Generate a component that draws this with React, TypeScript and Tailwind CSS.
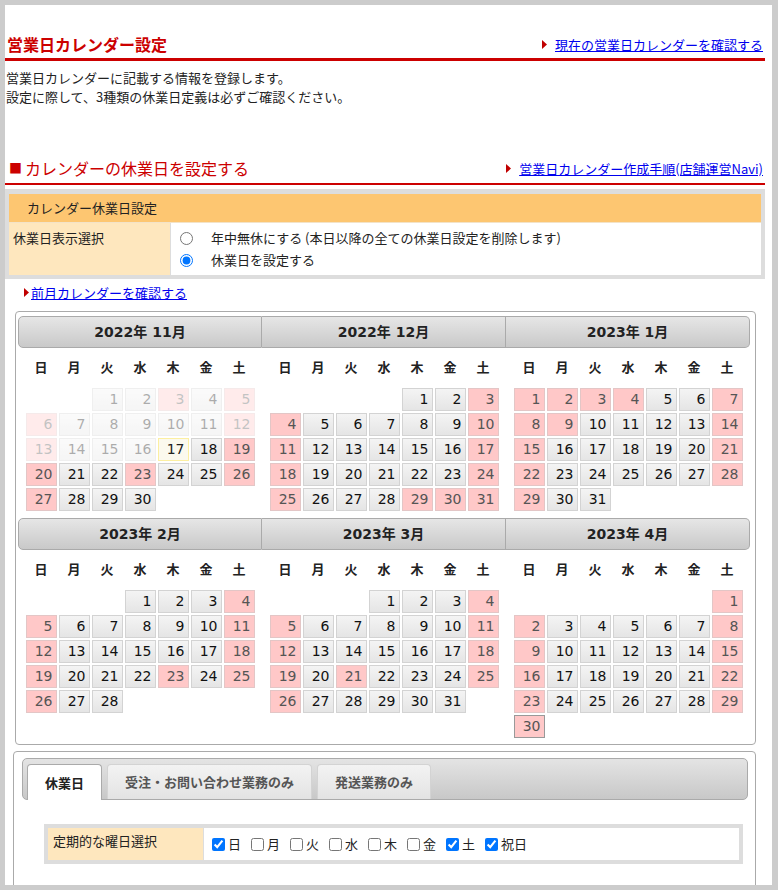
type Month = {
  title: string
  start: number
  days: number
  off: number[]
  past?: number
  today?: number
  focus?: number
}

const ROWS: Month[][] = [
  [
    { title: '2022年 11月', start: 2, days: 30, off: [3, 5, 6, 12, 13, 19, 20, 23, 26, 27], past: 16, today: 17 },
    { title: '2022年 12月', start: 4, days: 31, off: [3, 4, 10, 11, 17, 18, 24, 25, 29, 30, 31] },
    { title: '2023年 1月', start: 0, days: 31, off: [1, 2, 3, 4, 7, 8, 9, 14, 15, 21, 22, 28, 29] },
  ],
  [
    { title: '2023年 2月', start: 3, days: 28, off: [4, 5, 11, 12, 18, 19, 23, 25, 26] },
    { title: '2023年 3月', start: 3, days: 31, off: [4, 5, 11, 12, 18, 19, 21, 25, 26] },
    { title: '2023年 4月', start: 6, days: 30, off: [1, 2, 8, 9, 15, 16, 22, 23, 29, 30], focus: 30 },
  ],
]

const WEEK = ['日', '月', '火', '水', '木', '金', '土']
const CHECKS: [string, boolean][] = [
  ['日', true],
  ['月', false],
  ['火', false],
  ['水', false],
  ['木', false],
  ['金', false],
  ['土', true],
  ['祝日', true],
]

function Marker() {
  return (
    <svg width="5" height="9" viewBox="0 0 5 9" className="shrink-0">
      <path d="M0 0 L5 4.5 L0 9 Z" fill="#c00000" />
    </svg>
  )
}

function DayCell({ day, month }: { day: number; month: Month }) {
  const past = month.past !== undefined && day <= month.past
  const isToday = month.today === day
  const off = month.off.includes(day)
  let tone = 'border-[#d3d3d3] bg-linear-to-b from-[#f4f4f4] to-[#e5e5e5] text-[#111]'
  if (isToday) tone = 'border-[#fcefa1] bg-[#fbf9ee] text-[#222]'
  else if (off) tone = 'border-[#e3c6c6] bg-[#ffc8c8] text-[#555]'
  if (month.focus === day) tone = 'border-[#999] bg-[#ffc8c8] text-[#555]'
  return (
    <div
      className={`h-[23px] border pr-[3px] text-right text-[14px] leading-[21px] ${tone} ${past ? 'opacity-35' : ''}`}
    >
      {day}
    </div>
  )
}

function MonthBlock({ month, pos }: { month: Month; pos: number }) {
  const shape =
    pos === 0 ? 'rounded-l-[5px] border' : pos === 2 ? 'rounded-r-[5px] border border-l-0' : 'border border-l-0'
  const blanks = Array.from({ length: month.start })
  const days = Array.from({ length: month.days }, (_, i) => i + 1)
  return (
    <div className="flex flex-col">
      <div
        className={`flex h-[32px] items-center justify-center border-[#aaa] bg-linear-to-b from-[#e6e6e6] to-[#c9c9c9] text-[14px] font-bold text-[#222] ${shape}`}
      >
        {month.title}
      </div>
      <div className="mx-auto grid h-[40px] grid-cols-[repeat(7,31px)] items-center gap-x-[2px] text-center text-[13px] font-bold text-[#222]">
        {WEEK.map((w) => (
          <span key={w}>{w}</span>
        ))}
      </div>
      <div className="mx-auto grid grid-cols-[repeat(7,31px)] gap-[2px] font-['DejaVu_Sans',sans-serif]">
        {blanks.map((_, i) => (
          <div key={`b${i}`} />
        ))}
        {days.map((d) => (
          <DayCell key={d} day={d} month={month} />
        ))}
      </div>
    </div>
  )
}

export default function App() {
  return (
    <div className="h-[890px] w-[778px] bg-[#cccccc] pt-[5px] pl-[5px]">
      <div className="h-[880px] w-[767px] overflow-hidden bg-white font-['DejaVu_Sans','Noto_Sans_CJK_JP',sans-serif] text-[13px] text-[#222]">
        {/* page title */}
        <div className="mr-[7px] flex items-end justify-between border-b-[3px] border-[#cc0000] pt-[29px] pr-[2px] pb-[4px] pl-[2px]">
          <h1 className="font-['Noto_Sans_CJK_JP',sans-serif] text-[16px] leading-[20px] font-bold text-[#cc0000]">
            営業日カレンダー設定
          </h1>
          <a className="flex items-center gap-[8px] font-['Noto_Sans_CJK_JP',sans-serif] leading-[19px] text-[#0000ee] underline">
            <Marker />
            現在の営業日カレンダーを確認する
          </a>
        </div>

        <div className="mt-[7px] pl-[1px] font-['Noto_Sans_CJK_JP',sans-serif] leading-[19px]">
          <p>営業日カレンダーに記載する情報を登録します。</p>
          <p>設定に際して、3種類の休業日定義は必ずご確認ください。</p>
        </div>

        {/* section header */}
        <div className="mt-[51px] mr-[7px] flex items-end justify-between border-b-2 border-[#cc0000] pr-[2px] pb-[4px] pl-[4px] font-['Noto_Sans_CJK_JP',sans-serif]">
          <h2 className="flex items-center text-[16px] leading-[22px] text-[#cc0000]">
            <span className="mr-[3px] text-[13px]">■</span>カレンダーの休業日を設定する
          </h2>
          <a className="mb-[1px] flex items-center gap-[8px] leading-[19px] text-[#0000ee] underline">
            <Marker />
            営業日カレンダー作成手順(店舗運営Navi)
          </a>
        </div>

        {/* settings table */}
        <div className="mt-[4px] mr-[7px] border-[4px] border-t-[5px] border-[#dddddd] font-['Noto_Sans_CJK_JP',sans-serif]">
          <div className="flex h-[28px] items-center bg-[#fdc671] pl-[18px]">カレンダー休業日設定</div>
          <div className="flex h-[53px] border-t border-[#f3e3c8]">
            <div className="w-[162px] border-r border-[#dddddd] bg-[#fee7be] pt-[4px] pl-[4px] leading-[22px]">
              休業日表示選択
            </div>
            <div className="flex-1 pt-[4px] pl-[9px]">
              <label className="flex h-[22px] items-center gap-[18px]">
                <input type="radio" name="mode" className="m-0 size-[13px]" />
                年中無休にする (本日以降の全ての休業日設定を削除します)
              </label>
              <label className="flex h-[22px] items-center gap-[18px]">
                <input type="radio" name="mode" defaultChecked className="m-0 size-[13px]" />
                休業日を設定する
              </label>
            </div>
          </div>
        </div>

        <a className="mt-[4px] ml-[19px] flex w-fit items-center gap-[2px] font-['Noto_Sans_CJK_JP',sans-serif] leading-[19px] text-[#0000ee] underline">
          <Marker />
          前月カレンダーを確認する
        </a>

        {/* calendars */}
        <div className="mt-[9px] ml-[10px] w-[741px] rounded-[4px] border border-[#aaaaaa] pt-[4px] pb-[6px] pl-[2px] font-['DejaVu_Sans','Noto_Sans_CJK_JP',sans-serif]">
          <div className="grid w-[732px] grid-cols-3 gap-y-[7px]">
            {ROWS.flatMap((row) => row.map((m, i) => <MonthBlock key={m.title} month={m} pos={i} />))}
          </div>
        </div>

        {/* tabs */}
        <div className="mt-[6px] ml-[8px] h-[200px] w-[743px] rounded-[4px] border border-[#aaaaaa] pt-[6px] pr-[7px] pl-[8px] font-['Noto_Sans_CJK_JP',sans-serif]">
          <div className="flex h-[42px] items-end gap-[5px] rounded-[5px] border border-[#aaaaaa] bg-linear-to-b from-[#e4e4e4] to-[#c8c8c8] pl-[4px]">
            <div className="-mb-px flex h-[36px] items-center rounded-t-[4px] border border-b-0 border-[#aaaaaa] bg-white px-[17px] font-bold text-[#212121]">
              休業日
            </div>
            <div className="flex h-[35px] items-center rounded-t-[4px] border border-b-0 border-[#d3d3d3] bg-linear-to-b from-[#f3f3f3] to-[#e3e3e3] px-[17px] font-bold text-[#555]">
              受注・お問い合わせ業務のみ
            </div>
            <div className="flex h-[35px] items-center rounded-t-[4px] border border-b-0 border-[#d3d3d3] bg-linear-to-b from-[#f3f3f3] to-[#e3e3e3] px-[17px] font-bold text-[#555]">
              発送業務のみ
            </div>
          </div>

          <div className="mt-[24px] ml-[22px] flex h-[40px] w-[699px] border-[4px] border-[#dddddd]">
            <div className="w-[156px] border-r border-[#dddddd] bg-[#fee7be] pt-[3px] pl-[5px] leading-[20px]">
              定期的な曜日選択
            </div>
            <div className="flex flex-1 items-center pl-[8px]">
              {CHECKS.map(([label, on]) => (
                <label key={label} className="mr-[10px] flex items-center gap-[3px] leading-[20px]">
                  <input type="checkbox" defaultChecked={on} className="m-0 size-[13px]" />
                  {label}
                </label>
              ))}
            </div>
          </div>
        </div>
      </div>
    </div>
  )
}
